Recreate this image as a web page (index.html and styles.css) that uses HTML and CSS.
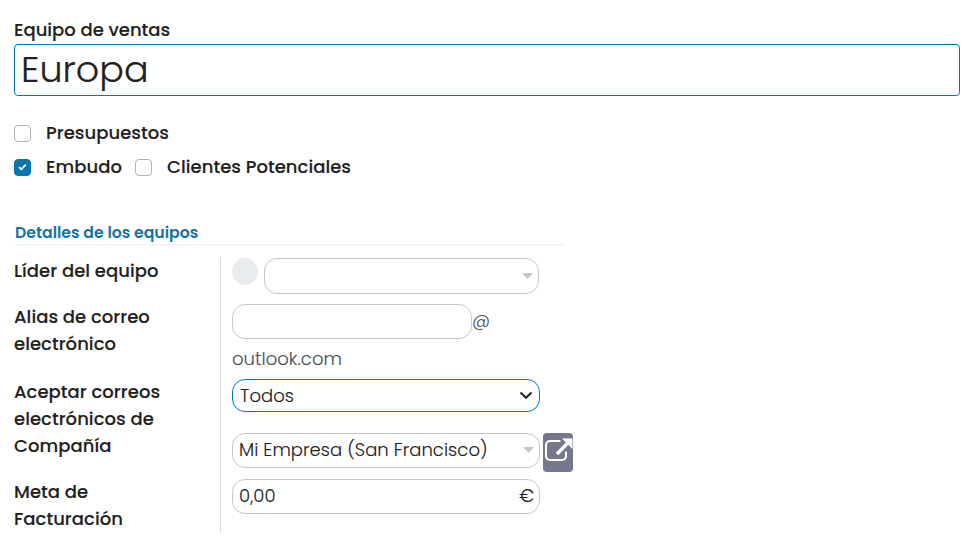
FILE: index.html
```html
<!DOCTYPE html>
<html lang="es">
<head>
<meta charset="utf-8">
<title>Equipo de ventas</title>
<link rel="stylesheet" href="styles.css">
</head>
<body>
<main class="sheet">
  <div class="title-label">Equipo de ventas</div>
  <div class="name-field">Europa</div>
  <div class="options">
    <div class="option-row">
      <span class="check"></span><span class="option-text">Presupuestos</span>
    </div>
    <div class="option-row">
      <span class="check checked"><svg width="9" height="8" viewBox="0 0 9 8"><path d="M1 4.200 3.300 6.300 7.800 1.700" fill="none" stroke="#fff" stroke-width="1.800"/></svg></span><span class="option-text first">Embudo</span>
      <span class="check second"></span><span class="option-text">Clientes Potenciales</span>
    </div>
  </div>
  <h2 class="section-title">Detalles de los equipos</h2>
  <section class="details">
    <div class="label">Líder del equipo</div>
    <div class="value leader">
      <span class="avatar"></span>
      <div class="field leader-field"><svg class="caret" width="11" height="6" viewBox="0 0 11 6"><path d="M0 0h11L5.500 6z" fill="#c8c8c8"/></svg></div>
    </div>
    <div class="label">Alias de correo<br>electrónico</div>
    <div class="value alias">
      <div class="alias-line"><div class="field alias-field"></div><span class="raised">@</span></div>
      <div class="domain">outlook.com</div>
    </div>
    <div class="label">Aceptar correos<br>electrónicos de</div>
    <div class="value">
      <div class="field select"><span>Todos</span><svg width="14" height="9" viewBox="0 0 14 9"><path d="M1.500 1.500 7 6.800l5.500-5.300" fill="none" stroke="#212529" stroke-width="2"/></svg></div>
    </div>
    <div class="label">Compañía</div>
    <div class="value company">
      <div class="field company-field"><span class="raised">Mi Empresa (San Francisco)</span><svg class="caret" width="11" height="6" viewBox="0 0 11 6"><path d="M0 0h11L5.500 6z" fill="#c8c8c8"/></svg></div>
      <span class="open-button"><svg width="30" height="39" viewBox="0 0 30 39"><path d="M17.500 8H7a4 4 0 0 0-4 4v11a4 4 0 0 0 4 4h12a4 4 0 0 0 4-4V18.500" fill="none" stroke="#fff" stroke-width="2.100"/><path d="M14 21 25 9.800" stroke="#fff" stroke-width="3.400"/><path d="M19 5.500h10.500v10.500z" fill="#fff"/></svg></span>
    </div>
    <div class="label">Meta de<br>Facturación</div>
    <div class="value">
      <div class="field amount"><span class="raised">0,00</span><span class="raised">€</span></div>
    </div>
  </section>
</main>
</body>
</html>
```
FILE: styles.css
```css
* { box-sizing: border-box; }
body {
  margin: 0;
  background: #fff;
  color: #212121;
  font-family: Poppins, Inter, "Open Sans", sans-serif;
  font-size: 18px;
  line-height: 27px;
  letter-spacing: 0.04px;
  -webkit-text-stroke: 0.1px;
}
svg { display: block; flex: none; }
.sheet { padding: 16px 13px 0 14px; height: 544px; overflow: hidden; }
.title-label { height: 28px; font-weight: 500; letter-spacing: 0; }
.name-field {
  height: 52px;
  border: 1px solid #0b76ab;
  border-radius: 4px;
  padding-left: 6px;
  font-size: 36.500px;
  font-weight: 300;
  line-height: 50px;
  -webkit-text-stroke: 0.2px;
}
.options { padding-top: 20px; }
.option-row { display: flex; align-items: center; height: 34px; font-weight: 500; }
.check {
  width: 17px;
  height: 17px;
  flex: none;
  border: 1px solid #adb3ba;
  border-radius: 4px;
  display: flex;
  align-items: center;
  justify-content: center;
}
.checked { background: #0b76ab; border-color: #0b76ab; }
.option-text { margin-left: 15px; padding-bottom: 2px; white-space: nowrap; }
.first { width: 75px; }
.second { margin-left: 14px; }
.section-title {
  margin: 34px 0 0 1px;
  width: 550px;
  height: 28px;
  border-bottom: 2px solid #f4f5f6;
  color: #1474a8;
  font-size: 15.700px;
  font-weight: 600;
  line-height: 29px;
  letter-spacing: 0;
  -webkit-text-stroke: 0;
}
.details {
  display: grid;
  grid-template-columns: 206px 353px;
  grid-template-rows: 46px 75px 54px 46px 54px;
  margin-top: 12px;
}
.label { margin-top: -1px; font-weight: 500; white-space: nowrap; }
.value { border-left: 1px solid #dcdcdc; padding-left: 11px; font-weight: 300; }
.field {
  display: flex;
  align-items: center;
  justify-content: space-between;
  height: 35px;
  border: 1px solid #c8c8c8;
  border-radius: 13px;
  padding: 0 6px;
  white-space: nowrap;
}
.raised { padding-bottom: 2px; }
.leader { display: flex; gap: 6px; }
.avatar { width: 26px; height: 27px; border-radius: 50%; background: #e9ecef; }
.leader-field { width: 275px; height: 36px; padding-right: 5px; }
.leader .field { justify-content: flex-end; }
.alias { color: #495057; }
.alias-line { display: flex; align-items: center; }
.alias-field { width: 240px; }
.domain { padding-top: 6px; }
.select { width: 308px; height: 33px; border-color: #0b76ab; padding-left: 7px; }
.company { display: flex; gap: 3px; }
.company-field { width: 308px; }
.company-field .caret { margin-right: -1px; margin-bottom: 1px; }
.open-button { width: 30px; height: 39px; border-radius: 4px; background: #74788d; overflow: hidden; }
.amount { width: 308px; padding-right: 5px; }
```
